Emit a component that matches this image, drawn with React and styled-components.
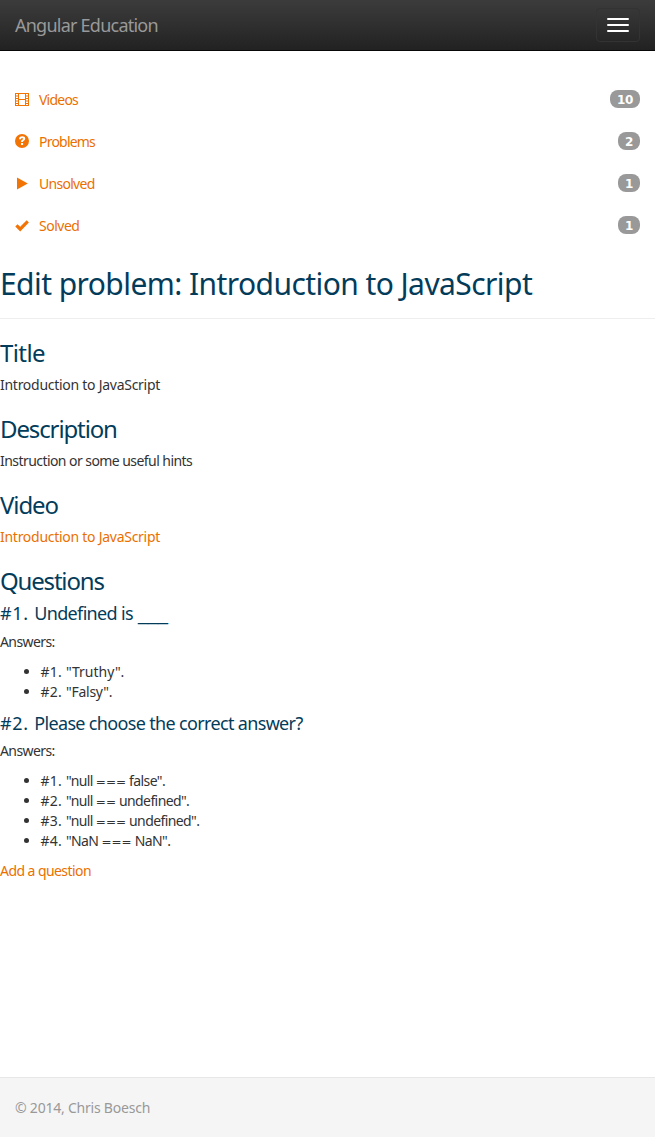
import React from "react";
import styled, { createGlobalStyle } from "styled-components";

const GlobalStyle = createGlobalStyle`
  * { box-sizing: border-box; }
  body {
    margin: 0;
    background: #fff;
    color: #333;
    font-family: "Noto Sans", "DejaVu Sans", sans-serif;
    font-size: 14px;
    line-height: 20px;
  }
`;

const Page = styled.div`
  display: flex;
  flex-direction: column;
  min-height: 1137px;
`;

const Navbar = styled.header`
  display: flex;
  align-items: center;
  justify-content: space-between;
  height: 51px;
  padding: 0 15px;
  background: linear-gradient(to bottom, #3c3c3c 0%, #222 100%);
  border-bottom: 1px solid #080808;
`;

const Brand = styled.a`
  color: #999;
  font-size: 18px;
  letter-spacing: -0.76px;
`;

const Toggle = styled.button`
  display: flex;
  flex-direction: column;
  gap: 4px;
  width: 44px;
  height: 34px;
  padding: 9px 10px;
  background: transparent;
  border: 1px solid #333;
  border-radius: 4px;
`;

const ToggleBar = styled.span`
  width: 22px;
  height: 2px;
  border-radius: 1px;
  background: #fff;
`;

const NavList = styled.nav`
  display: flex;
  flex-direction: column;
  gap: 2px;
  padding-top: 29px;
`;

const NavItem = styled.a`
  display: flex;
  align-items: center;
  height: 40px;
  padding: 0 15px;
  color: #eb7000;
`;

const NavIcon = styled.svg`
  width: 14px;
  height: 14px;
  margin: 0 10px 2px 0;
  fill: #f27405;
`;

const NavLabel = styled.span`
  flex: 1;
  letter-spacing: ${(p) => p.$spacing}px;
`;

const Badge = styled.span`
  height: 18px;
  margin-bottom: 2px;
  padding: 4px 7px 2px;
  border-radius: 8px;
  background: #999;
  color: #fff;
  font: bold 12px/12px "DejaVu Sans", sans-serif;
  letter-spacing: -0.3px;
  text-align: center;
`;

const PageTitle = styled.h1`
  margin: 21px 0;
  padding-bottom: 18px;
  border-bottom: 1px solid #eee;
  color: #033c5a;
  font-size: 30px;
  font-weight: 400;
  line-height: 33px;
  letter-spacing: -0.57px;
`;

const SectionTitle = styled.h3`
  margin: 0 0 ${(p) => (p.$tight ? 8 : 9)}px;
  color: #033c5a;
  font-size: 24px;
  font-weight: 400;
  line-height: 26px;
  letter-spacing: ${(p) => p.$spacing}px;
`;

const QuestionTitle = styled.h4`
  margin: 0 0 8px;
  padding-top: 1px;
  color: #033c5a;
  font-size: 18px;
  font-weight: 400;
  line-height: 20px;
  letter-spacing: -0.66px;
`;

const TitleNumber = styled.span`
  letter-spacing: 0.7px;
`;

const Blank = styled.span`
  font-family: "Liberation Sans", sans-serif;
  letter-spacing: 0;
  margin-left: 1px;
`;

const Text = styled.p`
  margin: 0 0 ${(p) => (p.$short ? 10 : 21)}px;
  letter-spacing: ${(p) => p.$spacing}px;
`;

const Link = styled.a`
  color: #eb7000;
`;

const AddLink = styled(Link)`
  letter-spacing: -0.57px;
`;

const Answers = styled.ul`
  margin: 0 0 10px;
  padding-left: 40.5px;
`;

const Answer = styled.li`
  letter-spacing: ${(p) => p.$spacing ?? -0.6}px;
`;

const AnswerNumber = styled.span`
  letter-spacing: 0.25px;
`;

const Operator = styled.span`
  font-family: "DejaVu Sans", sans-serif;
  font-size: 12px;
  line-height: 1;
  letter-spacing: 0;
`;

const Footer = styled.footer`
  height: 60px;
  margin-top: auto;
  padding: 20px 15px;
  border-top: 1px solid #e7e7e7;
  background: #f5f5f5;
  color: #999;
  letter-spacing: -0.22px;
`;

const icons = {
  film: (
    <path
      fillRule="evenodd"
      d="M0 1h14v13H0zM1 2v1.500h2V2zM1 4.500v1.500h2V4.500zM1 7v1.500h2V7zM1 9.500V11h2V9.500zM1 12v1h2v-1zM4 2v5h6V2zM4 8v5h6V8zM11 2v1.500h2V2zM11 4.500v1.500h2V4.500zM11 7v1.500h2V7zM11 9.500V11h2V9.500zM11 12v1h2v-1z"
    />
  ),
  question: (
    <path
      fillRule="evenodd"
      d="M7 0a7 7 0 1 1 0 14A7 7 0 0 1 7 0zM4 5.200h2.100c0-.8.4-1.200 1-1.200s.9.3.9.8c0 .6-.4.8-1 1.200-.7.5-1 .9-1 1.900h2c0-.6.3-.8.9-1.200.8-.5 1.300-1 1.300-2.100C10.200 3 9 2.300 7.200 2.300 5.200 2.300 4 3.300 4 5.200zM6 9v2.100h2.100V9z"
    />
  ),
  play: <path d="M2 1.600 12.800 7.500 2 13.400z" />,
  check: <path d="M.3 8.400 2.500 6.200 5.200 8.800 11.700 2.300 13.900 4.500 5.200 13.400z" />,
};

const navItems = [
  { icon: "film", label: "Videos", count: 10, spacing: -0.78 },
  { icon: "question", label: "Problems", count: 2, spacing: -0.79 },
  { icon: "play", label: "Unsolved", count: 1, spacing: -0.72 },
  { icon: "check", label: "Solved", count: 1, spacing: -0.5 },
];

const questions = [
  {
    text: "Undefined is ",
    blank: "___",
    answers: [{ text: '"Truthy".', spacing: 0 }, { text: '"Falsy".', spacing: -0.25 }],
  },
  {
    text: "Please choose the correct answer?",
    answers: [
      { text: '"null === false".' },
      { text: '"null == undefined".' },
      { text: '"null === undefined".' },
      { text: '"NaN === NaN".' },
    ],
  },
];

const withOperators = (text) =>
  text.split(/(=+)/).map((part, i) => (part.startsWith("=") ? <Operator key={i}>{part}</Operator> : part));

export default function App() {
  return (
    <Page>
      <GlobalStyle />
      <Navbar>
        <Brand>Angular Education</Brand>
        <Toggle aria-label="Toggle navigation"><ToggleBar /><ToggleBar /><ToggleBar /></Toggle>
      </Navbar>
      <NavList>
        {navItems.map((n) => (
          <NavItem key={n.label}>
            <NavIcon viewBox="0 0 14 14">{icons[n.icon]}</NavIcon>
            <NavLabel $spacing={n.spacing}>{n.label}</NavLabel>
            <Badge>{n.count}</Badge>
          </NavItem>
        ))}
      </NavList>
      <main>
        <PageTitle>Edit problem: Introduction to JavaScript</PageTitle>
        <SectionTitle $spacing={-0.6}>Title</SectionTitle>
        <Text $spacing={-0.27}>Introduction to JavaScript</Text>
        <SectionTitle $spacing={-1.12}>Description</SectionTitle>
        <Text $spacing={-0.56}>Instruction or some useful hints</Text>
        <SectionTitle $spacing={-1.1}>Video</SectionTitle>
        <Text $spacing={-0.27}><Link>Introduction to JavaScript</Link></Text>
        <SectionTitle $tight $spacing={-1.18}>Questions</SectionTitle>
        {questions.map((q, i) => (
          <section key={q.text}>
            <QuestionTitle>
              <TitleNumber>#{i + 1}. </TitleNumber>
              {q.text}
              {q.blank && <Blank>{q.blank}</Blank>}
            </QuestionTitle>
            <Text $short $spacing={-0.6}>Answers:</Text>
            <Answers>
              {q.answers.map((a, j) => (
                <Answer key={a.text} $spacing={a.spacing}>
                  <AnswerNumber>#{j + 1}. </AnswerNumber>
                  {withOperators(a.text)}
                </Answer>
              ))}
            </Answers>
          </section>
        ))}
        <AddLink>Add a question</AddLink>
      </main>
      <Footer>© 2014, Chris Boesch</Footer>
    </Page>
  );
}
